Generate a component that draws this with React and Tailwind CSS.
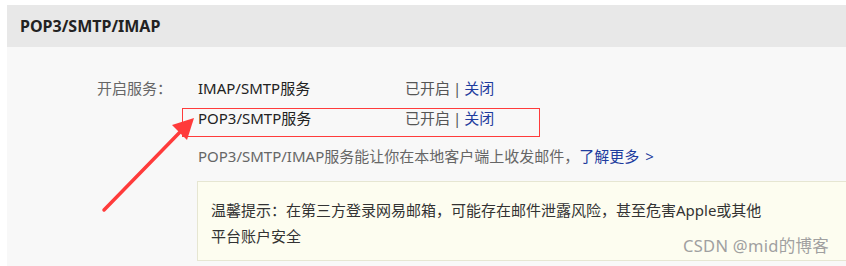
import React from "react";

const font = { fontFamily: '"Noto Sans", "Noto Sans CJK SC", sans-serif' };

function Status() {
  return (
    <span className="flex text-[#555]">
      <span>已开启</span>
      <span className="mx-[3px]">|</span>
      <span className="text-[#1e3c9e]">关闭</span>
    </span>
  );
}

export default function App() {
  return (
    <div className="relative w-[846px] h-[266px] bg-white overflow-hidden pt-[5px] pl-[7px] flex flex-col" style={font}>
      <div className="h-[42px] bg-[#e8e8e8] flex items-center pl-[13px]">
        <span className="text-[16px] font-bold text-[#222]">POP3/SMTP/IMAP</span>
      </div>
      <div className="flex-1 bg-[#f8f8f8] pt-[26px] flex">
        <div className="w-[191px] shrink-0 pr-[26px] text-right text-[15px] leading-[30px] text-[#666]">开启服务：</div>
        <div className="flex flex-col text-[15px]">
          <div className="flex leading-[30px]">
            <span className="w-[207px] shrink-0 text-[#222]">IMAP/SMTP服务</span>
            <Status />
          </div>
          <div className="flex leading-[30px]">
            <span className="w-[207px] shrink-0 text-[#222]">POP3/SMTP服务</span>
            <Status />
          </div>
          <div className="mt-[8px] leading-[30px] text-[#666]">
            POP3/SMTP/IMAP服务能让你在本地客户端上收发邮件，<span className="text-[#1e3c9e]">了解更多 <span className="ml-[2px]">&gt;</span></span>
          </div>
          <div className="mt-[10px] -ml-[1px] w-[700px] border border-[#e6e6d2] bg-[#fdfdf0] pt-[15px] pb-[11px] pl-[13px] text-[15px] leading-[26px] text-[#333]">
            <div>温馨提示：在第三方登录网易邮箱，可能存在邮件泄露风险，甚至危害Apple或其他</div>
            <div>平台账户安全</div>
          </div>
        </div>
      </div>
      <div className="absolute left-[182px] top-[108px] w-[358px] h-[29px] border-[1.5px] border-[#ff3b3b]" />
      <svg className="absolute left-0 top-0" width="846" height="266" viewBox="0 0 846 266">
        <line x1="104" y1="210" x2="182" y2="130" stroke="#ff3b3b" strokeWidth="3.5" strokeLinecap="round" />
        <polygon points="194,118 172,125 187,140" fill="#ff3b3b" />
      </svg>
      <div className="absolute left-[683px] top-[235px] text-[16.5px] leading-[22px] text-[#a0a0a0] tracking-[0.3px]">CSDN @mid的博客</div>
    </div>
  );
}
